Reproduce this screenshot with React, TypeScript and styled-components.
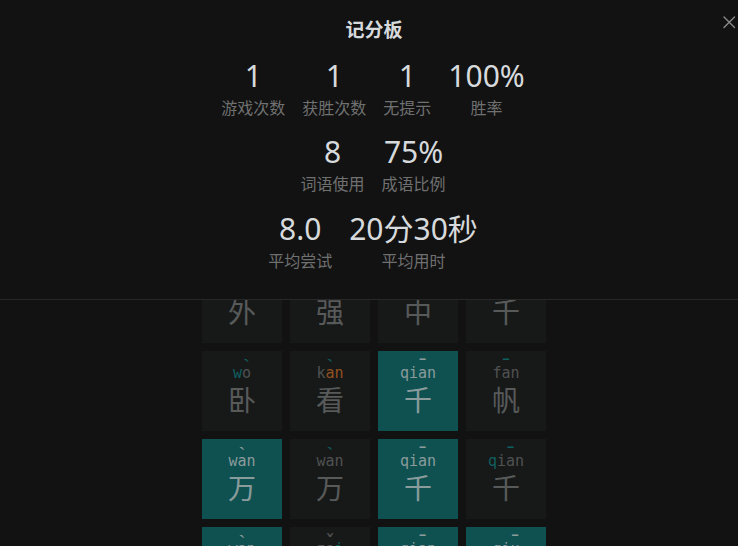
import React from "react";
import styled, { createGlobalStyle } from "styled-components";

type LetterState = "c" | "p" | "n";
type TileState = "correct" | "none";

interface TileData {
  char: string;
  py: string;
  letters: string;
  toneAt: number;
  tone: string;
  toneState: LetterState;
  tile: TileState;
}

const t = (
  char: string,
  py: string,
  letters: string,
  toneAt: number,
  tone: string,
  toneState: LetterState,
  tile: TileState = "none"
): TileData => ({ char, py, letters, toneAt, tone, toneState, tile });

const rows: TileData[][] = [
  [
    t("一", "yi", "nn", 1, "ˉ", "n"),
    t("言", "yan", "nnn", 1, "ˊ", "n"),
    t("九", "jiu", "nnn", 2, "ˇ", "n"),
    t("鼎", "ding", "nnnn", 1, "ˇ", "n"),
  ],
  [
    t("千", "qian", "cccc", 2, "ˉ", "c"),
    t("方", "fang", "nnnn", 1, "ˉ", "c"),
    t("百", "bai", "nnn", 1, "ˇ", "n"),
    t("计", "ji", "nn", 1, "ˋ", "n"),
  ],
  [
    t("外", "wai", "cnn", 1, "ˋ", "c"),
    t("强", "qiang", "nnnnn", 2, "ˊ", "n"),
    t("中", "zhong", "nnnnn", 2, "ˉ", "c"),
    t("千", "qian", "cnnn", 2, "ˉ", "c"),
  ],
  [
    t("卧", "wo", "cn", 1, "ˋ", "c"),
    t("看", "kan", "npp", 1, "ˋ", "c"),
    t("千", "qian", "cccc", 2, "ˉ", "c", "correct"),
    t("帆", "fan", "nnn", 1, "ˉ", "c"),
  ],
  [
    t("万", "wan", "ccc", 1, "ˋ", "c", "correct"),
    t("万", "wan", "nnn", 1, "ˋ", "c"),
    t("千", "qian", "cccc", 2, "ˉ", "c", "correct"),
    t("千", "qian", "cnnn", 2, "ˉ", "c"),
  ],
  [
    t("万", "wan", "ccc", 1, "ˋ", "c", "correct"),
    t("载", "zai", "nnc", 1, "ˇ", "n"),
    t("千", "qian", "cccc", 2, "ˉ", "c", "correct"),
    t("秋", "qiu", "ccc", 2, "ˉ", "c", "correct"),
  ],
];

const stats = [
  [
    { value: "1", label: "游戏次数" },
    { value: "1", label: "获胜次数" },
    { value: "1", label: "无提示" },
    { value: "100%", label: "胜率" },
  ],
  [
    { value: "8", label: "词语使用" },
    { value: "75%", label: "成语比例" },
  ],
  [
    { value: "8.0", label: "平均尝试" },
    { value: "20分30秒", label: "平均用时" },
  ],
];

const letterColor = (s: LetterState, tile: TileState) => {
  if (tile === "correct") return "#8a9b9b";
  if (s === "c") return "#0e5f5f";
  if (s === "p") return "#93501f";
  return "#4f5151";
};

export default function App() {
  return (
    <>
      <GlobalStyle />
      <Page>
        <Header>汉兜</Header>
        <Board>
          {rows.map((row, ri) => (
            <BoardRow key={ri}>
              {row.map((tile, ti) => (
                <Tile key={ti} $state={tile.tile}>
                  <Pinyin>
                    {tile.py.split("").map((l, li) => (
                      <Letter
                        key={li}
                        $color={letterColor(tile.letters[li] as LetterState, tile.tile)}
                      >
                        {l}
                        {li === tile.toneAt && (
                          <Tone $color={letterColor(tile.toneState, tile.tile)}>
                            {tile.tone}
                          </Tone>
                        )}
                      </Letter>
                    ))}
                  </Pinyin>
                  <Char $state={tile.tile}>{tile.char}</Char>
                </Tile>
              ))}
            </BoardRow>
          ))}
        </Board>
      </Page>
      <Modal>
        <Close aria-label="close">
          <svg width="14" height="14" viewBox="0 0 14 14">
            <path
              d="M2 2 L12.5 12.5 M12.5 2 L2 12.5"
              stroke="#8a8a8a"
              strokeWidth="1.4"
              strokeLinecap="round"
            />
          </svg>
        </Close>
        <Title>记分板</Title>
        <Stats>
          {stats.map((row, ri) => (
            <StatRow key={ri}>
              {row.map((s) => (
                <Stat key={s.label}>
                  <StatValue>{s.value}</StatValue>
                  <StatLabel>{s.label}</StatLabel>
                </Stat>
              ))}
            </StatRow>
          ))}
        </Stats>
      </Modal>
    </>
  );
}

const GlobalStyle = createGlobalStyle`
  html, body {
    margin: 0;
    padding: 0;
    background: #121212;
    overflow: hidden;
  }
  body {
    font-family: "Noto Sans", "Noto Sans CJK SC", sans-serif;
    color: #d7dadc;
  }
`;

const Page = styled.main`
  height: 546px;
  overflow: hidden;
  padding-left: 10px;
  box-sizing: border-box;
  display: flex;
  flex-direction: column;
  align-items: center;
`;

const Header = styled.header`
  height: 87px;
  flex-shrink: 0;
  display: flex;
  align-items: center;
  font-size: 24px;
  font-weight: 700;
  color: #555;
`;

const Board = styled.div`
  flex-shrink: 0;
  display: flex;
  flex-direction: column;
  gap: 8px;
`;

const BoardRow = styled.div`
  display: flex;
  gap: 8px;
`;

const Tile = styled.div<{ $state: TileState }>`
  width: 80px;
  height: 80px;
  flex-shrink: 0;
  background: ${(p) => (p.$state === "correct" ? "#0f5151" : "#171919")};
  display: flex;
  flex-direction: column;
  align-items: center;
  padding-top: 13px;
  box-sizing: border-box;
`;

const Pinyin = styled.div`
  display: flex;
  font-family: "DejaVu Sans Mono", monospace;
  font-size: 15px;
  line-height: 18px;
  height: 18px;
`;

const Letter = styled.span<{ $color: string }>`
  position: relative;
  color: ${(p) => p.$color};
`;

const Tone = styled.span<{ $color: string }>`
  position: absolute;
  left: -4px;
  right: -4px;
  top: -6px;
  text-align: center;
  font-size: 21px;
  line-height: 18px;
  color: ${(p) => p.$color};
`;

const Char = styled.div<{ $state: TileState }>`
  font-family: "Noto Sans CJK SC", sans-serif;
  font-size: 28px;
  line-height: 34px;
  color: ${(p) => (p.$state === "correct" ? "#8a9b9b" : "#585a5a")};
`;

const Modal = styled.section`
  position: fixed;
  top: 0;
  left: 0;
  right: 0;
  z-index: 10;
  background: #121212;
  border-bottom: 1px solid #282828;
  padding: 16px 0 28px 8px;
  display: flex;
  flex-direction: column;
  align-items: center;
`;

const Close = styled.button`
  position: absolute;
  top: 15px;
  right: 2px;
  width: 14px;
  height: 14px;
  padding: 0;
  border: none;
  background: none;
  display: flex;
`;

const Title = styled.h1`
  margin: 0 0 0 2px;
  font-family: "Noto Sans CJK SC", sans-serif;
  font-size: 19px;
  line-height: 26px;
  font-weight: 700;
  color: #d7dadc;
`;

const Stats = styled.div`
  margin-top: 13.5px;
  display: flex;
  flex-direction: column;
  gap: 14.5px;
`;

const StatRow = styled.div`
  display: flex;
  justify-content: center;
  gap: 17px;
`;

const Stat = styled.div`
  display: flex;
  flex-direction: column;
  align-items: center;
`;

const StatValue = styled.div`
  font-family: "Noto Sans", "Noto Sans CJK SC", sans-serif;
  font-size: 30px;
  line-height: 40px;
  color: #d7dadc;
  white-space: nowrap;
`;

const StatLabel = styled.div`
  font-family: "Noto Sans CJK SC", sans-serif;
  font-size: 16px;
  line-height: 22px;
  color: #6f7070;
  white-space: nowrap;
`;
